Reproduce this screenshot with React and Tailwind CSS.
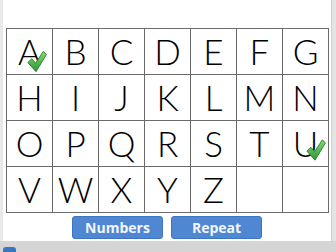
import React from "react";

const rows = [
  ["A", "B", "C", "D", "E", "F", "G"],
  ["H", "I", "J", "K", "L", "M", "N"],
  ["O", "P", "Q", "R", "S", "T", "U"],
  ["V", "W", "X", "Y", "Z", "", ""],
];

const Check = ({ className }) => (
  <svg
    viewBox="0 0 20 22"
    className={className}
  >
    <defs>
      <linearGradient id="chk" x1="0" y1="0" x2="0" y2="1">
        <stop offset="0" stopColor="#86de6e" />
        <stop offset="1" stopColor="#2c9436" />
      </linearGradient>
    </defs>
    <path
      d="M0.8 12 L4.8 8.2 L8.6 12.6 L16.4 0.8 L19.4 4 L9 21.2 Z"
      fill="url(#chk)"
      stroke="#2a7a30"
      strokeWidth="0.9"
      strokeLinejoin="round"
    />
  </svg>
);

const App = () => {
  return (
    <div className="w-[336px] h-[252px] flex flex-col bg-white overflow-hidden">

      <div className="flex h-[241px]">

        <div className="w-[3px] bg-[#e9e9e9]" />

        <div className="flex-1 flex flex-col pt-[28px] pl-[3px]">

          <div className="w-[323px] border-l border-t border-[#6a6a6a]">
            {rows.map((row, i) => (
              <div key={i} className="flex">
                {row.map((ch, j) => (
                  <div
                    key={j}
                    className="relative w-[46px] h-[46px] border-r border-b border-[#6a6a6a] flex items-center justify-center text-[35px] font-light leading-none text-black"
                    style={{ fontFamily: "Lato, 'Noto Sans', sans-serif" }}
                  >
                    {ch}
                    {ch === "A" && (
                      <Check className="absolute left-[20px] top-[21px] w-[20px] h-[23px]" />
                    )}
                    {ch === "U" && (
                      <Check className="absolute left-[23px] top-[18px] w-[20px] h-[22px]" />
                    )}
                  </div>
                ))}
              </div>
            ))}
          </div>

          <div className="flex justify-center gap-[8px] mt-[3px] pr-[3px]">
            {["Numbers", "Repeat"].map((label) => (
              <button
                key={label}
                className="w-[91px] h-[23px] rounded-[3px] bg-[#4f87d3] border border-[#3e74c0] text-[#f2f6fc] text-[14px] font-bold leading-none"
                style={{ fontFamily: "'Open Sans', sans-serif" }}
              >
                {label}
              </button>
            ))}
          </div>

        </div>

        <div className="w-[5px] bg-[#e4e4e4] border-l border-[#cfcfcf]" />

      </div>

      <div className="flex-1 bg-[#d5d5d5] relative">
        <div className="absolute left-[3px] top-[6px] w-[13px] h-[10px] rounded-t-[3px] bg-[#3a76c4]" />
      </div>

    </div>
  );
};

export default App;
